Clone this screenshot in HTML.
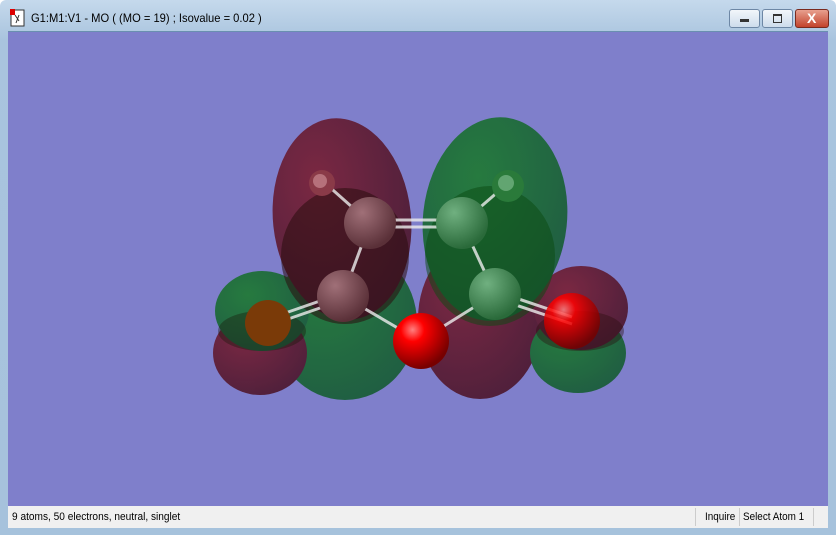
<!DOCTYPE html>
<html><head><style>
body{margin:0;width:836px;height:535px;overflow:hidden;font-family:"Liberation Sans",sans-serif;}
.win{position:absolute;left:0;top:0;width:836px;height:535px;background:linear-gradient(#c5d9ec,#a9c4de 40px,#a6c2dc);border-radius:6px 6px 0 0;}
.title{position:absolute;left:31px;top:11px;font-size:12px;color:#000;transform:scaleX(.93);transform-origin:left;white-space:nowrap}
.vp{position:absolute;left:8px;top:31px;width:820px;height:475px;background:#7f7fcb;border-top:1px solid #6a8fb0;}
.sb{position:absolute;left:8px;top:506px;width:820px;height:22px;background:#f0f0f0;font-size:11px;}
.sb div{white-space:nowrap}
.btn{position:absolute;top:9px;height:17px;border:1px solid #6d87a5;border-radius:3px;background:linear-gradient(#f2f6fa,#cddcec);}
</style></head><body>
<div class="win">
<svg style="position:absolute;left:10px;top:9px" width="16" height="18"><rect x="1" y="1" width="13" height="16" fill="#fff" stroke="#333"/><rect x="0" y="0" width="5" height="6" fill="#d00"/><path d="M5 6 L9 12 M9 6 L6 14" stroke="#333"/></svg>
<div class="title">G1:M1:V1 - MO ( (MO = 19) ; Isovalue = 0.02 )</div>
<div class="btn" style="left:729px;width:29px"><div style="position:absolute;left:10px;top:9px;width:9px;height:3px;background:#333"></div></div>
<div class="btn" style="left:762px;width:29px"><div style="position:absolute;left:10px;top:4px;width:7px;height:6px;border:1px solid #333;border-top-width:2px"></div></div>
<div class="btn" style="left:795px;width:32px;background:linear-gradient(#e8a08f,#c2432c);border-color:#7a2a1e"><div style="position:absolute;left:11px;top:0px;color:#fff;font-weight:bold;font-size:14px">X</div></div>
<div class="vp">
<svg width="820" height="475" viewBox="8 31 820 475">
<defs>
<radialGradient id="rl" cx="35%" cy="30%" r="75%"><stop offset="0" stop-color="#7a1c30"/><stop offset="1" stop-color="#4a1428"/></radialGradient>
<radialGradient id="gl" cx="35%" cy="30%" r="75%"><stop offset="0" stop-color="#1a7a2c"/><stop offset="1" stop-color="#145a30"/></radialGradient>
<radialGradient id="ra" cx="35%" cy="30%" r="70%"><stop offset="0" stop-color="#ff8080"/><stop offset=".3" stop-color="#f00"/><stop offset="1" stop-color="#700"/></radialGradient>
<radialGradient id="ca" cx="35%" cy="30%" r="70%"><stop offset="0" stop-color="#a07078"/><stop offset="1" stop-color="#5a3038"/></radialGradient>
<radialGradient id="cg" cx="35%" cy="30%" r="70%"><stop offset="0" stop-color="#70b080"/><stop offset="1" stop-color="#2a6a3a"/></radialGradient>
</defs>
<g opacity=".88">
<ellipse cx="345" cy="322" rx="72" ry="77" fill="url(#gl)"/>
<ellipse cx="480" cy="318" rx="62" ry="80" fill="url(#rl)"/>
<ellipse cx="260" cy="352" rx="47" ry="42" fill="url(#rl)"/>
<ellipse cx="578" cy="352" rx="48" ry="40" fill="url(#gl)"/>
<ellipse cx="262" cy="310" rx="47" ry="40" fill="url(#gl)"/>
<ellipse cx="581" cy="307" rx="47" ry="42" fill="url(#rl)"/>
<ellipse cx="342" cy="218" rx="69" ry="101" transform="rotate(-6 342 218)" fill="url(#rl)"/>
<ellipse cx="495" cy="218" rx="72" ry="102" transform="rotate(6 495 218)" fill="url(#gl)"/>
</g>
<ellipse cx="345" cy="255" rx="64" ry="68" fill="#2a0c0c" opacity=".55"/>
<ellipse cx="490" cy="255" rx="65" ry="70" fill="#0a4a10" opacity=".5"/>
<ellipse cx="580" cy="330" rx="44" ry="20" fill="#2a0c0c" opacity=".4"/>
<ellipse cx="262" cy="330" rx="44" ry="20" fill="#1a1a0a" opacity=".4"/>
<g stroke="#eee" stroke-width="3" opacity=".8">
<line x1="325" y1="182" x2="370" y2="222"/><line x1="507" y1="183" x2="462" y2="222"/>
<line x1="370" y1="219" x2="462" y2="219"/><line x1="370" y1="226" x2="462" y2="226"/>
<line x1="370" y1="222" x2="343" y2="295"/><line x1="462" y1="222" x2="495" y2="293"/>
<line x1="343" y1="295" x2="420" y2="340"/><line x1="495" y1="293" x2="420" y2="340"/>
<line x1="343" y1="292" x2="268" y2="318"/><line x1="343" y1="299" x2="268" y2="325"/>
<line x1="495" y1="290" x2="572" y2="316"/><line x1="495" y1="297" x2="572" y2="323"/>
</g>
<circle cx="322" cy="182" r="13" fill="#8a3a48"/><circle cx="320" cy="180" r="7" fill="#c08088" opacity=".8"/>
<circle cx="508" cy="185" r="16" fill="#2a7a3a"/><circle cx="506" cy="182" r="8" fill="#70b080" opacity=".8"/>
<circle cx="370" cy="222" r="26" fill="url(#ca)"/>
<circle cx="462" cy="222" r="26" fill="url(#cg)"/>
<circle cx="343" cy="295" r="26" fill="url(#ca)"/>
<circle cx="495" cy="293" r="26" fill="url(#cg)"/>
<circle cx="268" cy="322" r="23" fill="#7a3a08"/>
<circle cx="421" cy="340" r="28" fill="url(#ra)"/>
<circle cx="572" cy="320" r="28" fill="url(#ra)" opacity=".85"/>
</svg>
</div>
<div class="sb">
<div style="position:absolute;left:4px;top:5px;transform:scaleX(.92);transform-origin:left">9 atoms, 50 electrons, neutral, singlet</div>
<div style="position:absolute;left:687px;top:2px;height:18px;border-left:1px solid #ccc"></div>
<div style="position:absolute;left:697px;top:5px;transform:scaleX(.9);transform-origin:left">Inquire</div>
<div style="position:absolute;left:731px;top:2px;height:18px;border-left:1px solid #ccc"></div>
<div style="position:absolute;left:735px;top:5px;transform:scaleX(.9);transform-origin:left">Select Atom 1</div>
<div style="position:absolute;left:805px;top:2px;height:18px;border-left:1px solid #ccc"></div>
</div>
</div>
</body></html>
